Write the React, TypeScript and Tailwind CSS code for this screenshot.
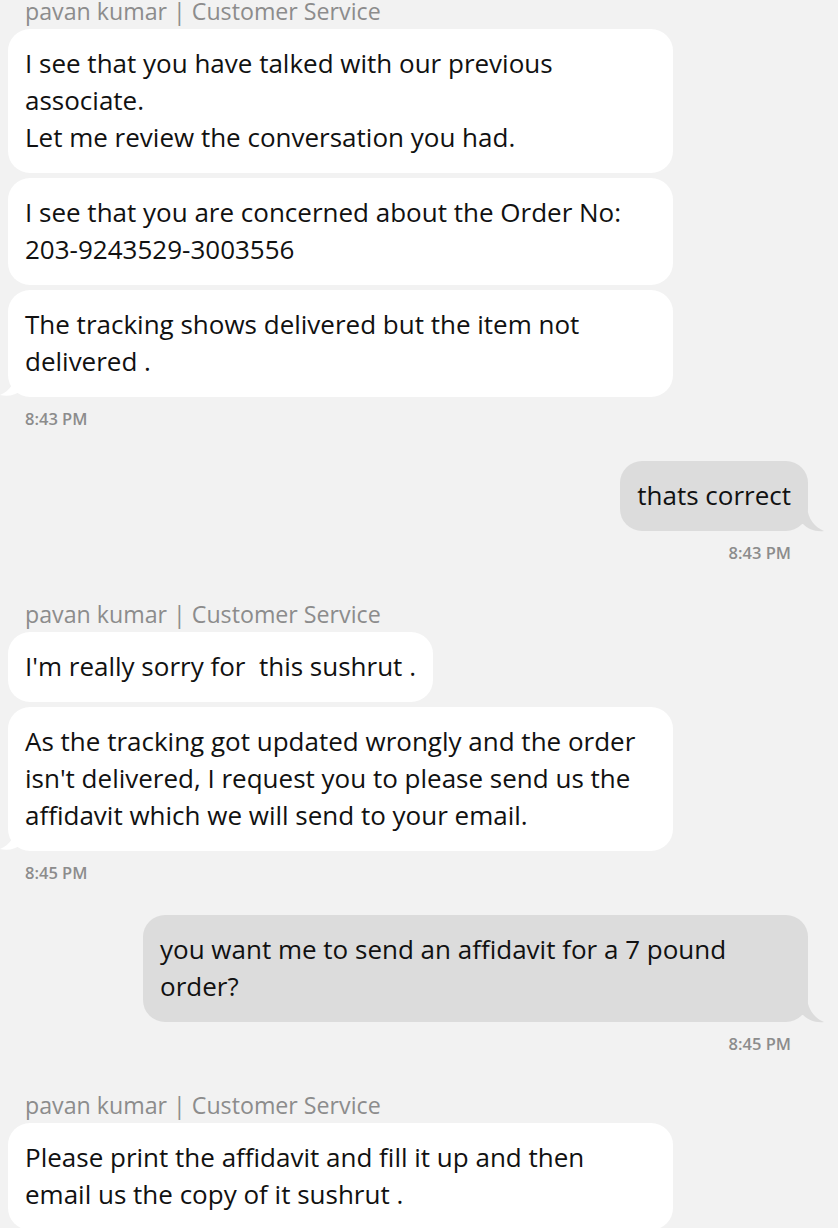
import React from 'react';

const font = { fontFamily: '"Open Sans", "Noto Sans", Arial, sans-serif' };

function TailLeft() {
  return (
    <svg className="absolute -left-[8px] bottom-0" width="26" height="30" viewBox="0 0 26 30">
      <path d="M26 0 L18 0 C17 14 10 24 0 28 C8 30 16 28 22 23 L26 23 Z" fill="#ffffff" />
    </svg>
  );
}

function TailRight() {
  return (
    <svg className="absolute -right-[17px] -bottom-[2px]" width="26" height="26" viewBox="0 0 26 26">
      <path d="M0 0 L8 0 C9 11 15 20 25 24 C16 25 9 22 4 17 L0 17 Z" fill="#dcdcdc" />
    </svg>
  );
}

function AgentName() {
  return (
    <div className="mb-1 pl-[25px] text-[23.2px] leading-[28px] text-[#8c8c8c]">
      pavan kumar | Customer Service
    </div>
  );
}

function Lines({ lines }: { lines: string[] }) {
  return (
    <div className="relative">
      {lines.map((l, i) => (
        <div key={i} className="whitespace-pre">
          {l}
        </div>
      ))}
    </div>
  );
}

function AgentBubble({ lines, tail }: { lines: string[]; tail?: boolean }) {
  const full = lines.length > 1;
  return (
    <div
      className={
        (full ? 'w-[665px] ' : 'w-fit ') +
        'relative ml-2 rounded-[22px] bg-white pt-4 pb-[17px] px-[17px] text-[26px] leading-[37px] text-[#111]'
      }
    >
      {tail && <TailLeft />}
      <Lines lines={lines} />
    </div>
  );
}

function UserBubble({ lines }: { lines: string[] }) {
  const full = lines.length > 1;
  return (
    <div
      className={
        (full ? 'w-[665px] ' : 'w-fit ') +
        'relative mr-[30px] ml-auto rounded-[22px] bg-[#dcdcdc] pt-4 pb-[17px] px-[17px] text-[26px] leading-[37px] text-[#111]'
      }
    >
      <TailRight />
      <Lines lines={lines} />
    </div>
  );
}

function Time({ t, right }: { t: string; right?: boolean }) {
  return (
    <div
      className={
        right
          ? 'mt-3 pr-[47px] text-right text-[16.5px] leading-[20px] font-semibold text-[#8c8c8c]'
          : 'mt-3 pl-[25px] text-[16.5px] leading-[20px] font-semibold text-[#8c8c8c]'
      }
    >
      {t}
    </div>
  );
}

export default function App() {
  return (
    <div className="h-[1228px] w-[838px] overflow-hidden bg-[#f2f2f2]" style={font}>
      <div className="-mt-[3px]">
        <AgentName />
        <div className="flex flex-col gap-[5px]">
          <AgentBubble
            lines={['I see that you have talked with our previous', 'associate.', 'Let me review the conversation you had.']}
          />
          <AgentBubble lines={['I see that you are concerned about the Order No:', '203-9243529-3003556']} />
          <AgentBubble tail lines={['The tracking shows delivered but the item not', 'delivered .']} />
        </div>
        <Time t="8:43 PM" />

        <div className="mt-8">
          <UserBubble lines={['thats correct']} />
          <Time right t="8:43 PM" />
        </div>

        <div className="mt-[37px]">
          <AgentName />
          <div className="flex flex-col gap-[5px]">
            <AgentBubble lines={["I'm really sorry for  this sushrut ."]} />
            <AgentBubble
              tail
              lines={[
                'As the tracking got updated wrongly and the order',
                "isn't delivered, I request you to please send us the",
                'affidavit which we will send to your email.',
              ]}
            />
          </div>
          <Time t="8:45 PM" />
        </div>

        <div className="mt-8">
          <UserBubble lines={['you want me to send an affidavit for a 7 pound', 'order?']} />
          <Time right t="8:45 PM" />
        </div>

        <div className="mt-[37px]">
          <AgentName />
          <AgentBubble
            lines={['Please print the affidavit and fill it up and then', 'email us the copy of it sushrut .']}
          />
        </div>
      </div>
    </div>
  );
}
